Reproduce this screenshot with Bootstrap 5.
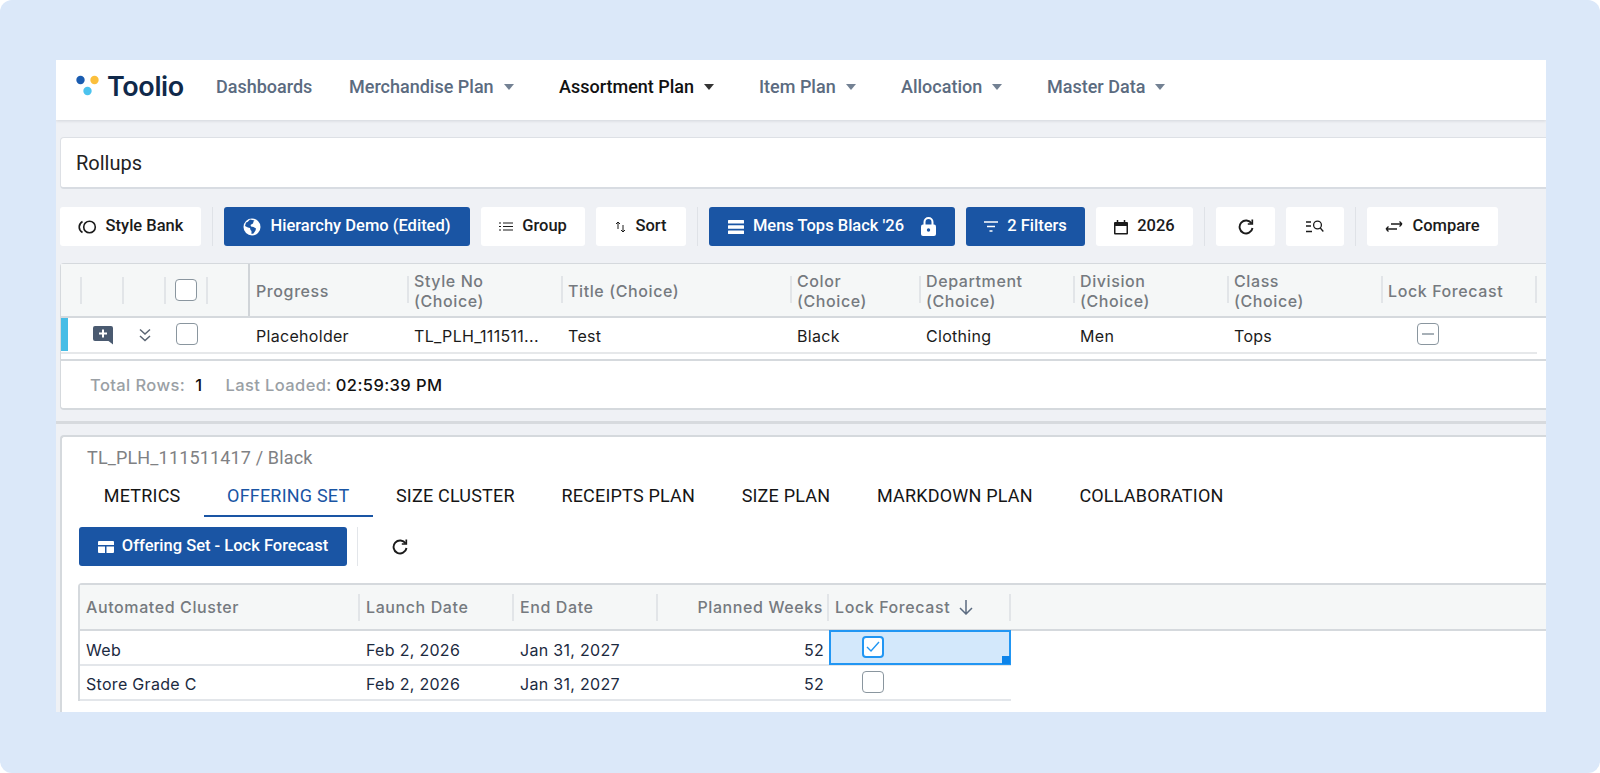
<!DOCTYPE html>
<html lang="en">
<head>
<meta charset="utf-8">
<title>Toolio</title>
<link rel="stylesheet" href="https://cdn.jsdelivr.net/npm/bootstrap@5.3.0/dist/css/bootstrap.min.css">
<style>
html,body{height:773px;overflow:hidden;background:#fff}
body{font-family:Roboto,"Liberation Sans",sans-serif}
.frame{height:773px;background:#dbe8f9;border-radius:12px;padding:60px 54px 61px 56px}
.app{height:652px;background:#eff1f5;overflow:hidden}
.topnav{height:60px;background:#fff;box-shadow:0 1px 3px rgba(40,50,70,.14);padding:0 0 8px}
.brand{width:160px;padding-left:19px;gap:5px;color:#10294a;font:600 27px Inter,sans-serif;letter-spacing:-.4px}
.navi{font-size:18px;font-weight:500;color:#5b6b80;text-decoration:none;white-space:nowrap}
.navi.on{color:#111}
.navi .tri{display:inline-block;width:0;height:0;border:5.5px solid transparent;border-top:6px solid currentColor;border-bottom:0;margin-left:10px;vertical-align:3px;opacity:.85}
.n1{width:133px}.n2{width:210px}.n3{width:200px}.n4{width:142px}.n5{width:146px}
.rollbox{margin:17px -12px 0 4px;height:52px;background:#fff;border:1px solid #dde0e5;border-bottom:2px solid #d8dce2;border-radius:4px;padding-left:15px;font-size:20px;color:#222}
.tools{margin:18px 0 0 4px;height:39px;gap:11px}
.tbtn{height:39px;border-radius:3px;border:0;background:#fff;color:#1b1b1b;font-size:16.5px;font-weight:500;padding:0;display:flex;align-items:center;justify-content:center;gap:9px;white-space:nowrap}
.tbtn:hover{background:#fff;color:#1b1b1b}
.tbtn.blue,.tbtn.blue:hover{background:#1a55a4;color:#fff}
.tdiv{width:1px;height:39px;background:#dfe2e7}
.w141{width:141px}.w246{width:246px}.w104{width:104px}.w90{width:90px}.w119{width:119px}.w97{width:97px}.w59{width:59px}.w58{width:58px}.w131{width:131px}
.grid-card{background:#fff;border:2px solid #d5d9dd;font-family:Inter,sans-serif;font-size:16px;letter-spacing:.3px;color:#1b1b1b}
.top-card{margin:17px -12px 0 4px;height:147px;border-radius:4px 0 0 4px;border-width:1px 0 2px 1px}
.grow{display:grid;align-items:center}
.top-cols{grid-template-columns:21px 42px 42px 42px 42px 158px 154px 229px 129px 154px 154px 154px 154px 40px}
.ghead{background:#f5f7f7;color:#757a7f;font-weight:500;letter-spacing:.6px;height:54px;border-bottom:2px solid #d5d9dd;line-height:20px}
.hc{height:27px;display:flex;align-items:center;padding-left:6px;border-right:2px solid #e2e5e8;white-space:nowrap}
.hc.tall{height:42px;border-right:0;padding:2px 0 0 6px;position:relative}
.hc.tall::after{content:"";position:absolute;right:-1px;top:7px;height:27px;width:2px;background:#e2e5e8}
.hc.none{padding:0}
.hc.pin{height:52px;padding:0;border-right-color:#d0d4d8}
.hc.nb{border-right:0}
.bx{display:block;width:22px;height:22px;border:1.5px solid #8a969f;border-radius:4px;background:#fff}
.boxup{margin-top:-2px}
.drow{height:36px;border-bottom:2px solid #e6e8ea;width:1476px}
.dcell{padding:2px 0 0 6px;white-space:nowrap;overflow:hidden}
.flag{width:7px;height:33px;background:#47bde6;align-self:start}
.lockcell{padding-left:35px}
.foot{border-top:2px solid #d5d9dd;margin-top:5px;height:50px;padding-left:29px;color:#9aa0a5;font-weight:500;font-size:16.5px;letter-spacing:.4px}
.foot b{font-weight:500;color:#111}
.gap-a{margin:0 23px 0 10px}
.gap-b{margin-left:4px}
.thick{height:3px;background:#d7dade;margin:11px 0 0 0}
.bottom{margin:11px -12px 0 4px;height:300px;background:#fff;border:2px solid #d5d9dd;border-width:2px 0 0 2px;border-radius:4px 0 0 0}
.crumb{height:37px;padding:7px 0 0 25px;font-size:18px;color:#7f8184;letter-spacing:.15px}
.tabbar{padding-left:18.5px;height:43px;flex-wrap:nowrap}
.tabx{height:43px;font-size:18px;font-weight:400;letter-spacing:.2px;color:#151515;text-decoration:none;display:flex;align-items:center;padding:2px 23.3px 0;border-bottom:2px solid transparent;white-space:nowrap}
.tabx.on{color:#1a55a4;border-bottom-color:#1a55a4}
.sub{margin:10px 0 0 17px;height:39px}
.sdiv{width:1px;height:39px;background:#e3e6ea;margin:0 34px 0 10px}
.w268{width:268px;gap:8px}
.g2{margin:17px 0 0 16px;border:2px solid #d5d9dd;border-width:2px 0 0 2px;border-radius:4px 0 0 0;font-family:Inter,sans-serif;font-size:16px;letter-spacing:.3px}
.low-cols{grid-template-columns:280px 154px 144px 171px 182px 1fr}
.g2 .ghead{height:46px}
.lrow{height:35px;border-bottom:2px solid #e3e6ea;width:931px;color:#1c2a3f}
.lcell{height:33px;display:flex;align-items:center;padding:3px 0 0 6px;white-space:nowrap}
.lcell.numc{padding-right:5px}
.lcell.sel{position:relative;background:#d3e8fb;border:2px solid #2196f3;height:35px;padding:0 0 2px 31px;margin-top:-1px}
.sel::after{content:"";position:absolute;right:-1px;bottom:-1px;width:8px;height:8px;background:#0d84ea}
.chk{display:flex;align-items:center;justify-content:center;width:22px;height:22px;border:2px solid #2196f3;border-radius:4px;background:#fff}
.lcell.boxc{padding:0 0 2px 33px}
</style>
</head>
<body>
<div class="frame">
<div class="app">
  <nav class="topnav d-flex align-items-center">
    <div class="brand d-flex align-items-center">
      <svg width="27" height="26" viewBox="0 0 27 26"><circle cx="5.5" cy="7" r="4.2" fill="#1a5cb0"/><circle cx="19.5" cy="7" r="4.2" fill="#fbbf3c"/><circle cx="12.5" cy="18" r="4.2" fill="#4cc3ee"/></svg>
      <span>Toolio</span>
    </div>
    <a class="navi n1" href="#">Dashboards</a>
    <a class="navi n2" href="#">Merchandise Plan<span class="tri"></span></a>
    <a class="navi n3 on" href="#">Assortment Plan<span class="tri"></span></a>
    <a class="navi n4" href="#">Item Plan<span class="tri"></span></a>
    <a class="navi n5" href="#">Allocation<span class="tri"></span></a>
    <a class="navi" href="#">Master Data<span class="tri"></span></a>
  </nav>

  <div class="rollbox d-flex align-items-center">Rollups</div>

  <div class="tools d-flex align-items-center">
    <button class="btn tbtn w141"><svg width="19" height="14" viewBox="0 0 19 14" fill="none" stroke="#1b1b1b" stroke-width="1.6"><path d="M4.5 1.5C2.5 2.7 1.2 4.7 1.2 7s1.300 4.300 3.300 5.500"/><circle cx="11.500" cy="7" r="5.800"/></svg>Style Bank</button>
    <div class="tdiv"></div>
    <button class="btn tbtn blue w246"><svg width="18" height="18" viewBox="0 0 18 18"><circle cx="9" cy="9" r="8.500" fill="#fff"/><path d="M7 1.500 4.500 4 3 4.500 2 8l3 1.500 2 .5.500 2 1 1v3l2-.5 2-3 .5-2-2.500-1.500-2.500-.5-.5-1.500 1.500-1 1-.5.500-2 1-1z" fill="#1a55a4"/></svg>Hierarchy Demo (Edited)</button>
    <button class="btn tbtn w104"><svg width="14" height="9" viewBox="0 0 14 9" stroke="#1b1b1b"><path d="M0 1h2M4 1h10M0 4.500h2M4 4.500h10M0 8h2M4 8h10"/></svg>Group</button>
    <button class="btn tbtn w90"><svg width="11" height="12" viewBox="0 0 11 12" fill="none" stroke="#1b1b1b"><path d="M3 8V1M1 3l2-2 2 2M8 4v7M6 9l2 2 2-2"/></svg>Sort</button>
    <div class="tdiv"></div>
    <button class="btn tbtn blue w246"><svg width="16" height="14" viewBox="0 0 16 14" fill="#fff"><rect y="0" width="16" height="3.600" rx=".5"/><rect y="5.200" width="16" height="3.600" rx=".5"/><rect y="10.400" width="16" height="3.600" rx=".5"/></svg>Mens Tops Black '26<svg class="ms-2" width="15" height="19" viewBox="0 0 15 19"><path d="M3.500 8V5a4 4 0 0 1 8 0v3" fill="none" stroke="#fff" stroke-width="2"/><rect x="0" y="7.500" width="15" height="11.500" rx="2" fill="#fff"/><circle cx="7.500" cy="13" r="1.700" fill="#1a55a4"/></svg></button>
    <button class="btn tbtn blue w119"><svg width="14" height="11" viewBox="0 0 14 11" stroke="#fff" stroke-width="1.500"><path d="M0 1h14M3 5.500h8M5.500 10h3"/></svg>2 Filters</button>
    <button class="btn tbtn w97"><svg width="14" height="16" viewBox="0 0 14 16"><path d="M1 3h12a1 1 0 0 1 1 1v10.500a1 1 0 0 1-1 1H1a1 1 0 0 1-1-1V4a1 1 0 0 1 1-1z" fill="#1b1b1b"/><rect x="1.500" y="7" width="11" height="7" fill="#fff"/><path d="M3.500 1v3M10.500 1v3" stroke="#1b1b1b" stroke-width="1.500"/></svg>2026</button>
    <div class="tdiv"></div>
    <button class="btn tbtn w59"><svg width="16" height="17" viewBox="0 0 16 17" fill="none" stroke="#1b1b1b" stroke-width="1.900"><path d="M13.600 5.500A6.500 6.500 0 1 0 14.500 10"/><path d="M14.300 1.500v4.500H9.800" stroke-width="1.700"/></svg></button>
    <button class="btn tbtn w58"><svg width="18" height="13" viewBox="0 0 18 13" fill="none" stroke="#1b1b1b" stroke-width="1.300"><path d="M0 2h5M0 6h5M0 11.500h6"/><circle cx="11.500" cy="5" r="3.900"/><path d="M14.300 8l3 3.500"/></svg></button>
    <div class="tdiv"></div>
    <button class="btn tbtn w131"><svg width="18" height="13" viewBox="0 0 18 13" fill="none" stroke="#1b1b1b" stroke-width="1.300"><path d="M1 9h11M1 9l2.500-2.500M1 9l2.500 2.500"/><path d="M6 4h11M17 4l-2.500-2.500M17 4l-2.500 2.500"/></svg>Compare</button>
  </div>

  <section class="grid-card top-card">
    <div class="grow top-cols ghead">
      <div class="hc none"></div><div class="hc none"></div><div class="hc none"></div>
      <div class="hc none justify-content-center"><span class="bx"></span></div>
      <div class="hc pin"></div>
      <div class="hc tall">Progress</div>
      <div class="hc tall">Style No<br>(Choice)</div>
      <div class="hc tall">Title (Choice)</div>
      <div class="hc tall">Color<br>(Choice)</div>
      <div class="hc tall">Department<br>(Choice)</div>
      <div class="hc tall">Division<br>(Choice)</div>
      <div class="hc tall">Class<br>(Choice)</div>
      <div class="hc tall">Lock Forecast</div>
    </div>
    <div class="grow top-cols drow">
      <div class="flag"></div>
      <div class="d-flex justify-content-center"><svg width="20" height="19" viewBox="0 0 20 19"><path d="M2 0h16a2 2 0 0 1 2 2v16.500L15.500 15H2a2 2 0 0 1-2-2V2a2 2 0 0 1 2-2z" fill="#4a5a70"/><path d="M10 3.500v8M6 7.500h8" stroke="#fff" stroke-width="2"/></svg></div>
      <div class="d-flex justify-content-center"><svg width="12" height="14" viewBox="0 0 12 14" fill="none" stroke="#5a6573" stroke-width="1.500"><path d="M1 1.500l5 4.500 5-4.500M1 8l5 4.500L11 8"/></svg></div>
      <div class="d-flex justify-content-center"><span class="bx boxup"></span></div>
      <div></div>
      <div class="dcell">Placeholder</div>
      <div class="dcell">TL_PLH_111511...</div>
      <div class="dcell">Test</div>
      <div class="dcell">Black</div>
      <div class="dcell">Clothing</div>
      <div class="dcell">Men</div>
      <div class="dcell">Tops</div>
      <div class="lockcell"><span class="bx boxup d-flex align-items-center justify-content-center"><svg width="12" height="2" viewBox="0 0 12 2"><path d="M0 1h12" stroke="#8a969f" stroke-width="1.500"/></svg></span></div>
    </div>
    <div class="foot d-flex align-items-center">
      <span>Total Rows:</span><b class="gap-a">1</b><span>Last Loaded:</span><b class="gap-b">02:59:39 PM</b>
    </div>
  </section>

  <div class="thick"></div>

  <section class="bottom">
    <div class="crumb">TL_PLH_111511417 / Black</div>
    <ul class="nav tabbar">
      <li><a class="tabx" href="#">METRICS</a></li>
      <li><a class="tabx on" href="#">OFFERING SET</a></li>
      <li><a class="tabx" href="#">SIZE CLUSTER</a></li>
      <li><a class="tabx" href="#">RECEIPTS PLAN</a></li>
      <li><a class="tabx" href="#">SIZE PLAN</a></li>
      <li><a class="tabx" href="#">MARKDOWN PLAN</a></li>
      <li><a class="tabx" href="#">COLLABORATION</a></li>
    </ul>
    <div class="sub d-flex align-items-center">
      <button class="btn tbtn blue w268"><svg width="16" height="12" viewBox="0 0 16 12" fill="#fff"><path d="M1 0h14a1 1 0 0 1 1 1v3H0V1a1 1 0 0 1 1-1zM0 5.500h7V12H1a1 1 0 0 1-1-1zM8.500 5.500H16V11a1 1 0 0 1-1 1H8.500z"/></svg>Offering Set - Lock Forecast</button>
      <div class="sdiv"></div>
      <svg width="16" height="17" viewBox="0 0 16 17" fill="none" stroke="#1b1b1b" stroke-width="1.900"><path d="M13.600 5.500A6.500 6.500 0 1 0 14.500 10"/><path d="M14.300 1.500v4.500H9.800" stroke-width="1.700"/></svg>
    </div>
    <div class="g2">
      <div class="grow low-cols ghead">
        <div class="hc">Automated Cluster</div>
        <div class="hc">Launch Date</div>
        <div class="hc">End Date</div>
        <div class="hc justify-content-end pe-1">Planned Weeks</div>
        <div class="hc">Lock Forecast<svg class="ms-2" width="16" height="16" viewBox="0 0 16 16" fill="none" stroke="#5b6b80" stroke-width="1.500"><path d="M8 1v14M2 9l6 6 6-6"/></svg></div>
        <div class="hc nb"></div>
      </div>
      <div class="grow low-cols lrow">
        <div class="lcell">Web</div><div class="lcell">Feb 2, 2026</div><div class="lcell">Jan 31, 2027</div>
        <div class="lcell numc justify-content-end">52</div>
        <div class="lcell sel"><span class="chk"><svg width="14" height="11" viewBox="0 0 14 11" fill="none" stroke="#2196f3" stroke-width="1.400"><path d="M1 6l4 4 8-9"/></svg></span></div>
      </div>
      <div class="grow low-cols lrow">
        <div class="lcell">Store Grade C</div><div class="lcell">Feb 2, 2026</div><div class="lcell">Jan 31, 2027</div>
        <div class="lcell numc justify-content-end">52</div>
        <div class="lcell boxc"><span class="bx"></span></div>
      </div>
    </div>
  </section>
</div>
</div>
<script src="https://cdn.jsdelivr.net/npm/bootstrap@5.3.0/dist/js/bootstrap.bundle.min.js"></script>
</body>
</html>
